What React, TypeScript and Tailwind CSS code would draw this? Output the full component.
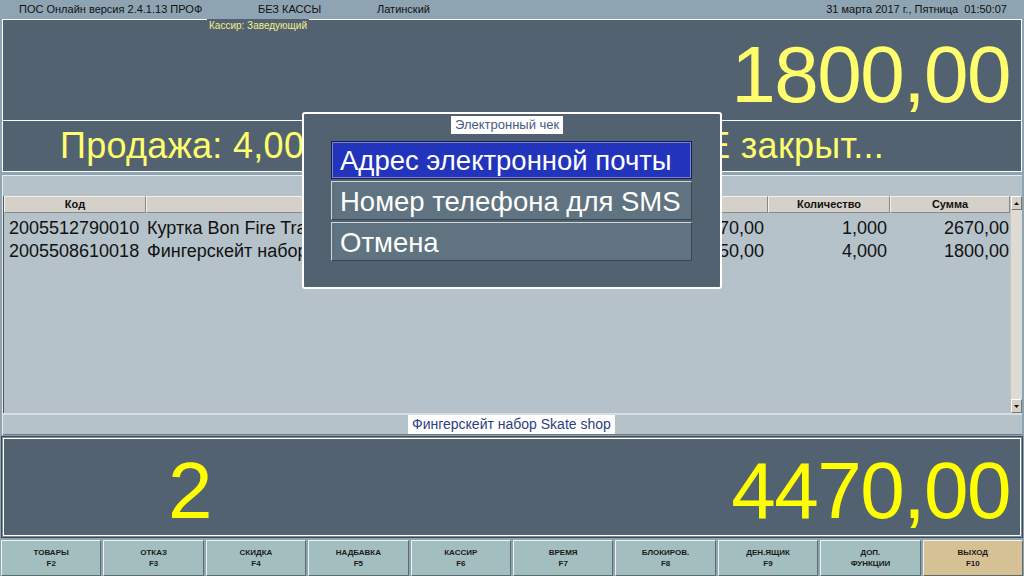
import React from "react";

const F = { fontFamily: '"Liberation Sans", Arial, sans-serif' };

const keys: [string, string][] = [
  ["ТОВАРЫ", "F2"],
  ["ОТКАЗ", "F3"],
  ["СКИДКА", "F4"],
  ["НАДБАВКА", "F5"],
  ["КАССИР", "F6"],
  ["ВРЕМЯ", "F7"],
  ["БЛОКИРОВ.", "F8"],
  ["ДЕН.ЯЩИК", "F9"],
  ["ДОП.", "ФУНКЦИИ"],
  ["ВЫХОД", "F10"],
];

export default function App() {
  return (
    <div
      className="relative w-[1024px] h-[576px] overflow-hidden bg-[#8ea4b2] flex flex-col text-black"
      style={F}
    >
      {/* top bar */}
      <div className="h-[19px] flex items-center text-[11px] text-[#111] pl-[19px] pr-[17px] shrink-0">
        <span className="w-[239px]">ПОС Онлайн версия 2.4.1.13 ПРОФ</span>
        <span className="w-[119px]">БЕЗ КАССЫ</span>
        <span>Латинский</span>
        <span className="ml-auto whitespace-pre">31 марта 2017 г., Пятница  01:50:07</span>
      </div>

      {/* upper display */}
      <div className="mx-[2px] shrink-0 relative">
        <div className="h-[102px] bg-[#536270] border border-white flex items-end justify-end pr-[11px] pb-[5px]">
          <span className="text-[80px] leading-none tracking-[-1.5px] text-[#ffff6e]">1800,00</span>
        </div>
        <span className="absolute left-[205px] top-0 px-[2px] h-[13px] leading-[13px] bg-[#536270] text-[10px] text-[#f4f08a]">
          Кассир: Заведующий
        </span>
        <div className="h-[51px] bg-[#536270] border-x border-b border-white flex items-center pl-[57px] overflow-hidden">
          <span className="text-[36px] leading-none tracking-[0.3px] text-[#ffff6e] whitespace-nowrap">
            Продажа: 4,000 x 450 = 1800,00 Чек НЕ закрыт...
          </span>
        </div>
      </div>

      {/* table */}
      <div className="mt-[3px] mx-[2px] h-[260px] shrink-0 bg-[#b5c2ca] border-l border-t border-[#e6ebee] flex flex-col">
        <div className="h-[20px] shrink-0" />
        <div className="flex flex-1 min-h-0">
          <div className="flex-1 flex flex-col border-l border-[#555]">
            <div className="h-[17px] flex text-[11px] font-bold text-[#111] shrink-0">
              <div className="w-[142px] bg-[#d5d0c8] border border-[#888] border-l-[#f4f2ee] border-t-[#f4f2ee] flex items-center justify-center">Код</div>
              <div className="w-[430px] bg-[#d5d0c8] border border-[#888] border-l-[#f4f2ee] border-t-[#f4f2ee] flex items-center justify-center">Наименование</div>
              <div className="w-[192px] bg-[#d5d0c8] border border-[#888] border-l-[#f4f2ee] border-t-[#f4f2ee] flex items-center justify-center pl-[22px]">Цена</div>
              <div className="w-[122px] bg-[#d5d0c8] border border-[#888] border-l-[#f4f2ee] border-t-[#f4f2ee] flex items-center justify-center">Количество</div>
              <div className="flex-1 bg-[#d5d0c8] border border-[#888] border-l-[#f4f2ee] border-t-[#f4f2ee] flex items-center justify-center">Сумма</div>
            </div>
            <div className="h-[4px] shrink-0" />
            {[
              ["2005512790010", "Куртка Bon Fire Transition", "2670,00", "1,000", "2670,00"],
              ["2005508610018", "Фингерскейт набор Skate shop", "450,00", "4,000", "1800,00"],
            ].map((r) => (
              <div key={r[0]} className="h-[23px] flex items-center text-[18px] text-[#111] whitespace-nowrap">
                <div className="w-[142px] pl-[5px]">{r[0]}</div>
                <div className="w-[430px] pl-[1px] overflow-hidden">{r[1]}</div>
                <div className="w-[192px] text-right pr-[4px]">{r[2]}</div>
                <div className="w-[122px] text-right pr-[3px]">{r[3]}</div>
                <div className="flex-1 text-right pr-[1px]">{r[4]}</div>
              </div>
            ))}
          </div>
          {/* scrollbar */}
          <div className="w-[12px] bg-[#dedbd4] flex flex-col justify-between border-l border-[#c8c4bc]">
            <div className="h-[14px] bg-[#d5d0c8] border border-[#777] border-l-white border-t-white flex items-center justify-center">
              <svg width="5" height="3" viewBox="0 0 5 3"><path d="M2.5 0L5 3H0z" fill="#111" /></svg>
            </div>
            <div className="h-[14px] bg-[#d5d0c8] border border-[#777] border-l-white border-t-white flex items-center justify-center">
              <svg width="5" height="3" viewBox="0 0 5 3"><path d="M0 0H5L2.5 3z" fill="#111" /></svg>
            </div>
          </div>
        </div>
        <div className="h-[22px] shrink-0 border-t-2 border-[#d8dfe3] border-b border-b-[#6d7880] flex items-stretch">
          <div className="ml-[405px] bg-white px-[4px] flex items-center text-[14px] text-[#2c3f80]">
            Фингерскейт набор Skate shop
          </div>
        </div>
      </div>

      {/* lower display */}
      <div className="mt-[1px] mx-[1px] h-[102px] shrink-0 border border-[#3d4852] p-px bg-[#7e8d97]">
        <div className="h-full bg-[#536270] border border-white flex items-end pb-[4px] pr-[10px]">
          <span className="text-[80px] leading-none tracking-[-1.5px] text-[#ffff00] pl-[164px]">2</span>
          <span className="ml-auto text-[80px] leading-none tracking-[-1.5px] text-[#ffff00]">4470,00</span>
        </div>
      </div>

      {/* function keys */}
      <div className="mt-[2px] flex-1 grid grid-cols-10 gap-[2px] px-[1px]">
        {keys.map(([a, b], i) => (
          <div
            key={a}
            className={`${i === 9 ? "bg-[#d6c195]" : "bg-[#a3bebe]"} border border-[#eef3f3] border-r-[#5d6b70] border-b-[#5d6b70] flex flex-col items-center justify-center text-[8px] font-bold leading-[11px] text-[#1a1a1a]`}
          >
            <span>{a}</span>
            <span>{b}</span>
          </div>
        ))}
      </div>

      {/* modal */}
      <div className="absolute left-[302px] top-[112px] w-[420px] h-[177px] bg-[#536270] border-2 border-white rounded-[3px]">
        <div className="absolute left-[147px] top-[2px] h-[18px] px-[4px] bg-white text-[13px] leading-[18px] text-[#475a86]">
          Электронный чек
        </div>
        <div className="absolute left-[27px] top-[27px] w-[361px] flex flex-col gap-[2px]">
          <div className="h-[38px] bg-[#2134bb] border border-[#141c5a] outline outline-1 -outline-offset-2 outline-[#7c86c9] flex items-center pl-[8px] pt-[2px] text-[27.5px] text-white whitespace-nowrap">
            Адрес электронной почты
          </div>
          <div className="h-[39px] bg-[#5f7380] border border-[#cfd6da] border-r-[#3a454d] border-b-[#3a454d] flex items-center pl-[8px] pt-[2px] text-[27.5px] text-white whitespace-nowrap">
            Номер телефона для SMS
          </div>
          <div className="h-[39px] bg-[#5f7380] border border-[#cfd6da] border-r-[#3a454d] border-b-[#3a454d] flex items-center pl-[8px] pt-[2px] text-[27.5px] text-white whitespace-nowrap">
            Отмена
          </div>
        </div>
      </div>
    </div>
  );
}
